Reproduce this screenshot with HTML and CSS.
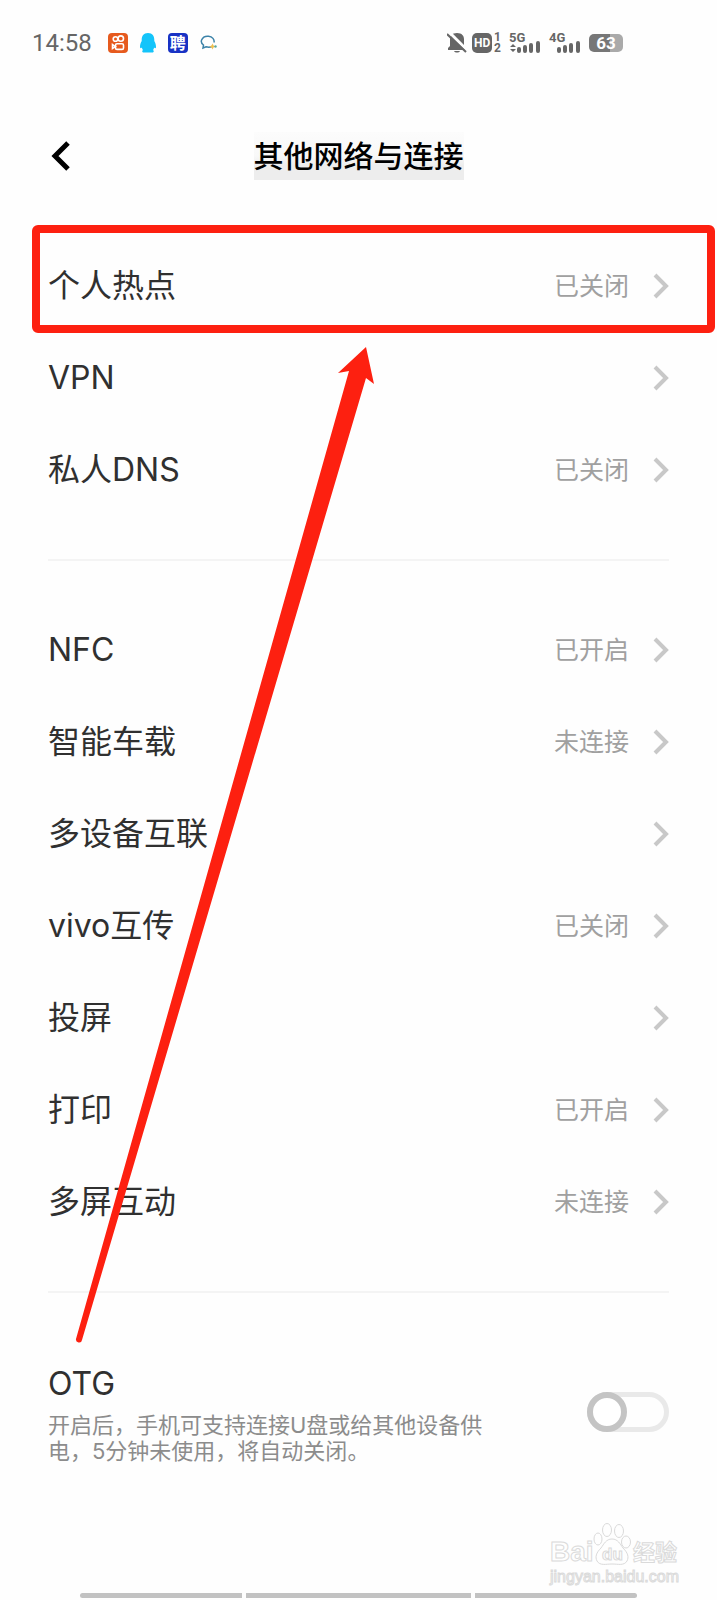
FILE: index.html
```html
<!DOCTYPE html>
<html lang="zh-CN">
<head>
  <meta charset="UTF-8" />
  <title>其他网络与连接</title>
  <meta name="viewport" content="width=device-width, initial-scale=1.0"/>
  <link rel="stylesheet" href="styles.css">
</head>
<body>
  <svg width="0" height="0" class="defs">
    <symbol id="chevron" viewBox="0 0 16 26"><path d="M2 2l11 11L2 24" fill="none" stroke="#c8c8c8" stroke-width="4"/></symbol>
    <symbol id="bars" viewBox="0 0 32 20">
      <path d="M10 16v2M16 14v4M22 12v6M29 10v8" fill="none" stroke="#666" stroke-width="4" stroke-linecap="round"/>
    </symbol>
  </svg>

  <div class="statusbar">
    <div class="status-left">
      <span class="time">14:58</span>
      <svg width="20" height="20" viewBox="0 0 20 20">
        <rect width="20" height="20" rx="4" fill="#e65a1e"/>
        <g fill="none" stroke="#fff" stroke-width="1.6">
          <circle cx="7.5" cy="6" r="2.3"/><circle cx="12.800" cy="5.600" r="2.700"/>
          <rect x="7.5" y="10.8" width="8" height="5.6" rx="1.5"/><path d="M7.5 13.600l-3-2v4z"/>
        </g>
      </svg>
      <svg width="16" height="20" viewBox="0 0 16 20">
        <path d="M8 0c4.500 0 6.300 3 6.300 7v1c1.200 2 1.700 4 1.700 6 0 1.500-1 1.500-2 .5 0 1-.5 2-1 2.500 1.500 1 .5 2.500-.5 2.500h-9c-1 0-2-1.500-.5-2.500-.5-.5-1-1.500-1-2.500-1 1-2 1-2-.5 0-2 .5-4 1.700-6V7c0-4 1.800-7 6.300-7z" fill="#14c4fa"/>
      </svg>
      <span class="zhaopin">聘</span>
      <svg width="18" height="16" viewBox="0 0 18 16">
        <path d="M12 11.500c-2 .8-4 .8-6 .2L3 13l.5-3C1.500 8.500 1 6.500 1.600 5 3 1.500 6.500 1 8.500 1.200c4 .4 6 3.300 5.600 6.300" fill="none" stroke="#3b82a8" stroke-width="1.500"/>
        <path d="M12.500 8.500l1 2 2 1-2 1-1 2-1-2-2-1 2-1z" fill="#f0c050"/><circle cx="15.500" cy="11.500" r="1.200" fill="#5aa8a0"/>
      </svg>
    </div>
    <div class="status-right">
      <svg width="20" height="20" viewBox="0 0 20 20">
        <path d="M10 0c5 0 7 3 7 6v7l2 2v2H1v-2l2-2V6c0-3 2-6 7-6zM7 18h6c-1 2-5 2-6 0z" fill="#666"/>
        <path d="M2 -1l19 19" stroke="#fefefe" stroke-width="3"/><path d="M0 1l19 18" stroke="#666" stroke-width="2"/>
      </svg>
      <span class="hd">HD</span>
      <span class="sim"><span>1</span><span>2</span></span>
      <span class="signal"><b>5G</b>
        <svg width="32" height="20"><use href="#bars"/><path d="M1 14l3-3 3 3zM1 16l3 3 3-3z" fill="#666"/></svg>
      </span>
      <span class="signal"><b>4G</b><svg width="32" height="20"><use href="#bars"/></svg></span>
      <span class="battery">63</span>
    </div>
  </div>

  <header>
    <button class="back" aria-label="返回">
      <svg width="20" height="32" viewBox="0 0 20 32"><path d="M17 3L4 16l13 13" fill="none" stroke="#000" stroke-width="5"/></svg>
    </button>
    <h1>其他网络与连接</h1>
  </header>

  <main>
    <ul>
      <li class="marked"><a href="#"><span>个人热点</span><em>已关闭</em><svg width="16" height="26"><use href="#chevron"/></svg></a></li>
      <li><a href="#"><span>VPN</span><svg width="16" height="26"><use href="#chevron"/></svg></a></li>
      <li><a href="#"><span>私人DNS</span><em>已关闭</em><svg width="16" height="26"><use href="#chevron"/></svg></a></li>
    </ul>
    <hr>
    <ul>
      <li><a href="#"><span>NFC</span><em>已开启</em><svg width="16" height="26"><use href="#chevron"/></svg></a></li>
      <li><a href="#"><span>智能车载</span><em>未连接</em><svg width="16" height="26"><use href="#chevron"/></svg></a></li>
      <li><a href="#"><span>多设备互联</span><svg width="16" height="26"><use href="#chevron"/></svg></a></li>
      <li><a href="#"><span>vivo互传</span><em>已关闭</em><svg width="16" height="26"><use href="#chevron"/></svg></a></li>
      <li><a href="#"><span>投屏</span><svg width="16" height="26"><use href="#chevron"/></svg></a></li>
      <li><a href="#"><span>打印</span><em>已开启</em><svg width="16" height="26"><use href="#chevron"/></svg></a></li>
      <li><a href="#"><span>多屏互动</span><em>未连接</em><svg width="16" height="26"><use href="#chevron"/></svg></a></li>
    </ul>
    <hr>
    <div class="otg">
      <div>
        <label for="otg">OTG</label>
        <p>开启后，手机可支持连接U盘或给其他设备供电，5分钟未使用，将自动关闭。</p>
      </div>
      <input id="otg" type="checkbox" class="switch"/>
    </div>
  </main>

  <div class="navbar"><i></i><i class="home"></i><i></i></div>

  <!-- arrow pointing at the hotspot row -->
  <svg class="arrow" width="304" height="1004" viewBox="0 0 304 1004">
    <path d="M291 7L299 44L291 38L7 1000A3 3 0 0 1 1 999L274 31L263 33z" fill="#fd2010"/>
  </svg>

  <svg class="watermark" width="132" height="66" viewBox="0 0 132 66">
    <g fill="#fefefe" stroke="#dadada" stroke-width="1">
      <text x="3" y="39" class="wm-big">Bai</text>
      <text x="86" y="38" class="wm-cn">经验</text>
      <ellipse cx="51" cy="17" rx="4" ry="6"/><ellipse cx="60" cy="8" rx="4.500" ry="6.500"/>
      <ellipse cx="72" cy="9" rx="4.500" ry="6.500"/><ellipse cx="79" cy="20" rx="4.500" ry="6"/>
      <path d="M65 17c6 0 8 5 11 9 5 5 6 9 4 13-3 5-9 3-15 3s-12 2-15-3c-2-4-1-8 4-13 3-4 5-9 11-9z"/>
      <text x="55" y="38" class="wm-du">du</text>
      <text x="3" y="60" class="wm-url">jingyan.baidu.com</text>
    </g>
  </svg>
</body>
</html>
```
FILE: styles.css
```css
* { box-sizing: border-box; }
body {
  margin: 0;
  min-height: 100vh;
  position: relative;
  display: flex;
  flex-direction: column;
  background: #fefefe;
  color: #303030;
  font-family: Inter, "Noto Sans CJK SC", sans-serif;
  font-size: 32px;
  line-height: 48px;
}
.defs { position: absolute; }

/* status bar */
.statusbar {
  height: 86px;
  padding: 0 94px 0 32px;
  display: flex;
  justify-content: space-between;
  align-items: center;
  color: #666;
}
.status-left, .status-right { display: flex; align-items: center; }
.status-left { gap: 12px; }
.status-right { gap: 8px; }
.time { font: 24px/28px Roboto, sans-serif; margin-right: 4px; }
.zhaopin {
  width: 20px;
  height: 20px;
  border-radius: 4px;
  background: #1832c4;
  color: #fff;
  font-size: 16px;
  font-weight: bold;
  line-height: 20px;
  text-align: center;
}
.hd {
  width: 20px;
  height: 20px;
  margin-left: -3px;
  border-radius: 5px;
  background: #666;
  color: #fefefe;
  font: bold 12px/20px Roboto, sans-serif;
  text-align: center;
}
.sim { display: flex; flex-direction: column; margin-left: -6px; font: bold 12px/11px Roboto, sans-serif; }
.signal { position: relative; height: 20px; line-height: 0; }
.signal b { position: absolute; left: 0; top: 0; font: bold 13px/10px Roboto, sans-serif; }
.battery {
  width: 34px;
  height: 18px;
  border-radius: 5px;
  background: linear-gradient(90deg, #777 63%, #aaa 63%);
  color: #fff;
  font: bold 17px/18px Roboto, sans-serif;
  text-align: center;
}

/* title */
header {
  height: 138px;
  display: grid;
  grid-template-columns: 1fr auto 1fr;
  align-items: center;
  padding: 2px 48px 0;
}
.back { justify-self: start; border: 0; background: none; padding: 0 3px; line-height: 0; cursor: pointer; }
h1 {
  margin: 0;
  font-size: 30px;
  font-weight: 500;
  color: #000;
  background: linear-gradient(#fcfcfc, #f8f8f8 50%, #ededed 70%);
}

/* setting rows */
main { padding-top: 16px; }
ul { list-style: none; margin: 0; padding: 0; }
li { position: relative; }
li a {
  display: flex;
  align-items: center;
  height: 92px;
  padding: 0 48px;
  color: inherit;
  text-decoration: none;
}
li span { flex: 1; }
li em { margin-right: 24px; font-size: 25px; font-style: normal; color: #a0a0a0; }
.marked::after {
  content: "";
  position: absolute;
  inset: -15px 2px -1px 32px;
  border: 8px solid #fd2010;
  border-radius: 6px;
  pointer-events: none;
}
hr { margin: 43px 48px; border: 0; height: 2px; background: #f4f4f4; }

.otg {
  display: flex;
  justify-content: space-between;
  align-items: center;
  padding: 24px 48px;
}
.otg p { margin: 4px 0 0; max-width: 440px; font-size: 22px; line-height: 26px; color: #8c8c8c; }
.switch {
  appearance: none;
  position: relative;
  width: 82px;
  height: 40px;
  margin: 0;
  border: 5px solid #e9e9e9;
  border-radius: 20px;
}
.switch::before {
  content: "";
  position: absolute;
  left: -5px;
  top: -5px;
  width: 40px;
  height: 40px;
  box-sizing: border-box;
  border: 6px solid #c4c4c4;
  border-radius: 50%;
  background: #fff;
}

/* gesture bar */
.navbar { display: flex; gap: 4px; margin-top: auto; padding: 0 80px 2px; }
.navbar i { flex: 162; height: 5px; background: #c2c2c2; }
.navbar .home { flex: 225; }
.navbar i:first-child { border-radius: 3px 0 0 3px; }
.navbar i:last-child { border-radius: 0 3px 3px 0; }

.arrow { position: absolute; left: 75px; top: 340px; pointer-events: none; }
.watermark { position: absolute; right: 38px; bottom: 12px; }
.wm-big { font: bold 28px "Liberation Sans", sans-serif; }
.wm-cn { font: bold 22px "Noto Sans CJK SC", sans-serif; }
.wm-du { font: bold 17px "Liberation Sans", sans-serif; }
.wm-url { font: 16px "Liberation Sans", sans-serif; }
```
